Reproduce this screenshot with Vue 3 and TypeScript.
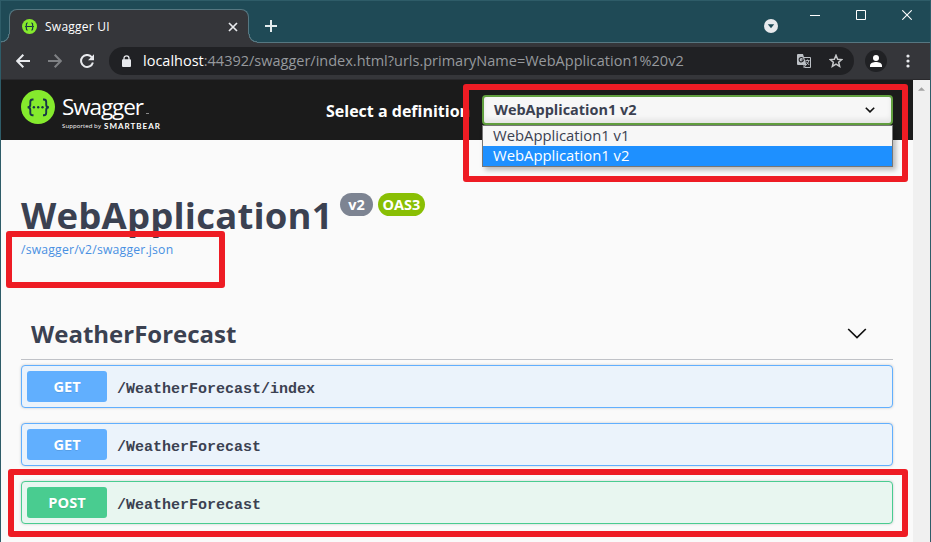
<script setup lang="ts">
interface Operation {
  method: 'get' | 'post'
  path: string
}

const definitions: string[] = ['WebApplication1 v1', 'WebApplication1 v2']
const selected = 'WebApplication1 v2'
const operations: Operation[] = [
  { method: 'get', path: '/WeatherForecast/index' },
  { method: 'get', path: '/WeatherForecast' },
  { method: 'post', path: '/WeatherForecast' },
]
</script>

<template>
  <div class="window">
    <header class="titlebar">
      <div class="tab">
        <svg class="favicon" viewBox="0 0 34 34">
          <circle cx="17" cy="17" r="17" fill="#85ea2d" />
          <g fill="none" stroke="#173647" stroke-width="2.6">
            <path d="M13 9h-1q-2 0-2 2.500v3q0 2.500-3 2.500q3 0 3 2.500v3q0 2.500 2 2.500h1M21 9h1q2 0 2 2.500v3q0 2.500 3 2.500q-3 0-3 2.500v3q0 2.500-2 2.500h-1M11 17h12" />
          </g>
        </svg>
        <span class="tab-title">Swagger UI</span>
        <svg class="tab-close" viewBox="0 0 10 10"><path d="M1 1l8 8M9 1l-8 8" stroke="#e8eaed" stroke-width="1.700" /></svg>
      </div>
      <svg class="new-tab" viewBox="0 0 12 12"><path d="M6 0v12M0 6h12" stroke="#e4ecee" stroke-width="2" /></svg>
      <svg class="tab-search" viewBox="0 0 14 14"><circle cx="7" cy="7" r="7" fill="#e8eaed" /><path d="M3.800 5.200h6.400L7 9.200z" fill="#1f4a56" /></svg>
      <svg class="win min" viewBox="0 0 10 10"><path d="M0 5.500h10" stroke="#fff" /></svg>
      <svg class="win max" viewBox="0 0 10 10"><path d="M.5.500h9v9h-9z" fill="none" stroke="#fff" /></svg>
      <svg class="win close" viewBox="0 0 10 10"><path d="M.3.300l9.400 9.400M9.700.300L.3 9.700" stroke="#fff" stroke-width="1.100" /></svg>
    </header>

    <nav class="toolbar">
      <svg class="nav back" viewBox="0 0 14 14"><path d="M14 7H1.500M7.300.800L1.200 7l6.100 6.200" /></svg>
      <svg class="nav forward" viewBox="0 0 14 14"><path d="M0 7h12.500M6.700.800L12.800 7l-6.100 6.200" /></svg>
      <svg class="nav reload" viewBox="0 0 14 14"><path d="M11.700 3.100A6 6 0 1 0 12.900 8.500" /><path d="M14 .200v6H8z" fill="#e8eaed" stroke="none" /></svg>
      <div class="omnibox">
        <svg class="lock" viewBox="0 0 9 12"><path d="M2 5V3.300a2.500 2.500 0 0 1 5 0V5" fill="none" stroke="#e8eaed" stroke-width="1.300" /><rect y="4.300" width="9" height="7.700" rx="1" fill="#e8eaed" /></svg>
        <span class="url"><b>localhost</b>:44392/swagger/index.html?urls.primaryName=WebApplication1%20v2</span>
        <svg class="translate" viewBox="0 0 14 14">
          <path d="M6.500 3.500h7v10h-6" fill="none" stroke="#bdc1c6" />
          <path d="M1 0h5l3.500 11H1q-1 0-1-1V1q0-1 1-1z" fill="#bdc1c6" />
          <path d="M6.200 4.500A2.200 2.200 0 1 0 6.500 6H4.500" fill="none" stroke="#202124" stroke-width="1.100" />
          <path d="M8.500 6.500h4M10.500 5.500v1M12 6.500q-1 3-3 4.500M9 7.500l3.200 3.500M7 11v2.500l2-2.500" fill="none" stroke="#bdc1c6" stroke-width=".9" />
        </svg>
        <svg class="star" viewBox="0 0 14 14"><path d="M7 1.300l1.650 3.900 4.200.350-3.200 2.750 1 4.100L7 10.200l-3.650 2.200 1-4.100-3.200-2.750 4.200-.350z" fill="none" stroke="#c6c8ca" stroke-width="1.500" /></svg>
      </div>
      <svg class="avatar" viewBox="0 0 22 22"><circle cx="11" cy="11" r="11" fill="#202124" /><circle cx="11" cy="8" r="3" fill="#fff" /><path d="M5 17v-1.500C5 13 8.500 12 11 12s6 1 6 3.500V17z" fill="#fff" /></svg>
      <svg class="menu" viewBox="0 0 4 14"><g fill="#e8eaed"><circle cx="2" cy="2" r="1.600" /><circle cx="2" cy="7" r="1.600" /><circle cx="2" cy="12" r="1.600" /></g></svg>
    </nav>

    <div class="viewport">
      <main class="page">
        <div class="topbar">
          <svg class="logo" viewBox="0 0 34 34">
            <circle cx="17" cy="17" r="17" fill="#85ea2d" />
            <path d="M12.500 9.500h-1Q9.300 9.500 9.300 12v2.700Q9.300 17 6.700 17.300Q9.300 17.600 9.300 20v2.700q0 2.500 2.200 2.500h1M22 9.500h1q2.200 0 2.200 2.500v2.700q0 2.300 2.600 2.600q-2.600.3-2.600 2.700v2.700q0 2.500-2.200 2.500h-1" fill="none" stroke="#173647" stroke-width="1.900" />
            <g fill="#173647"><circle cx="12.900" cy="17.300" r="1.200" /><circle cx="17.200" cy="17.300" r="1.200" /><circle cx="21.500" cy="17.300" r="1.200" /></g>
          </svg>
          <div class="brand">
            <div class="brand-name">Swagger<i></i></div>
            <div class="brand-by"><span>Supported by</span><b>SMARTBEAR</b></div>
          </div>
          <label class="select-label">Select a definition</label>
          <div class="select">
            <span>{{ selected }}</span>
            <svg viewBox="0 0 10 6"><path d="M.8.700L5 4.900 9.200.700" fill="none" stroke="#111" stroke-width="1.600" /></svg>
            <ul class="options">
              <li v-for="name in definitions" :key="name" :class="{ active: name === selected }">{{ name }}</li>
            </ul>
          </div>
        </div>

        <section class="info">
          <h2><span class="title">WebApplication1</span><span class="badge version">v2</span><span class="badge oas">OAS3</span></h2>
          <a class="spec">/swagger/v2/swagger.json</a>
        </section>

        <section class="tag">
          <h3>
            <span>WeatherForecast</span>
            <svg viewBox="0 0 20 11"><path d="M1.200 1l8.800 8.500L18.800 1" fill="none" stroke="#111" stroke-width="1.700" /></svg>
          </h3>
          <div v-for="op in operations" :key="op.method + op.path" class="op" :class="op.method">
            <span class="method">{{ op.method.toUpperCase() }}</span>
            <span class="path">{{ op.path }}</span>
          </div>
        </section>
      </main>
      <aside class="scrollbar"><svg viewBox="0 0 8 4"><path d="M0 4l4-4 4 4z" fill="#a3a3a3" /></svg></aside>
    </div>

    <div class="mark mark-select"></div>
    <div class="mark mark-spec"></div>
    <div class="mark mark-post"></div>
  </div>
</template>

<style>
body {
  margin: 0;
  overflow: hidden;
}
</style>

<style scoped>
* {
  box-sizing: border-box;
}
svg {
  display: block;
  flex: none;
}
.window {
  position: relative;
  width: 931px;
  height: 542px;
  overflow: hidden;
  display: flex;
  flex-direction: column;
  border: 1px solid #2e5c68;
  border-bottom: 0;
  background: #fafafa;
  font-family: "Open Sans", "Noto Sans", sans-serif;
  white-space: nowrap;
}
.titlebar {
  height: 42px;
  display: flex;
  flex: none;
  background: #1f4a56;
  border-bottom: 1px solid #567781;
}
.tab {
  position: relative;
  width: 240px;
  height: 34px;
  margin: 8px 0 0 8px;
  padding: 0 10px 0 12px;
  display: flex;
  align-items: center;
  background: #35363a;
  border: 1px solid #567781;
  border-bottom: 0;
  border-radius: 8px 8px 0 0;
}
.tab::before,
.tab::after {
  content: "";
  position: absolute;
  bottom: 0;
  width: 9px;
  height: 9px;
  border-bottom: 1px solid #567781;
  background: radial-gradient(circle at 0 0, #1f4a56 7px, #567781 7.500px 8.200px, #35363a 8.700px);
  border: 0;
}
.tab::before {
  left: -9px;
}
.tab::after {
  right: -9px;
  background: radial-gradient(circle at 100% 0, #1f4a56 7px, #567781 7.500px 8.200px, #35363a 8.700px);
}
.favicon {
  width: 15px;
  height: 15px;
}
.tab-title {
  margin-left: 8px;
  flex: 1;
  color: #fff;
  font-size: 12px;
  line-height: 16px;
  letter-spacing: 0.25px;
}
.tab-close {
  width: 10px;
  height: 10px;
}
.new-tab {
  width: 12px;
  height: 12px;
  margin: 19px 0 0 16px;
}
.tab-search {
  width: 14px;
  height: 14px;
  margin: 18px 0 0 auto;
}
.win {
  width: 10px;
  height: 10px;
}
.min {
  margin: 9px 0 0 32px;
}
.max {
  margin: 9px 0 0 36px;
}
.close {
  margin: 9px 18px 0 36px;
}
.toolbar {
  height: 37px;
  flex: none;
  display: flex;
  align-items: center;
  padding: 0 20px 1px 15px;
  background: #35363a;
  border-bottom: 1px solid #29292c;
}
.nav {
  width: 14px;
  height: 14px;
  fill: none;
  stroke: #e8eaed;
  stroke-width: 2;
}
.forward {
  margin-left: 18px;
  stroke: #7f8184;
}
.reload {
  margin-left: 18px;
}
.omnibox {
  width: 745px;
  height: 28px;
  margin-left: 15px;
  padding: 0 11px 0 13px;
  display: flex;
  align-items: center;
  background: #202124;
  border-radius: 14px;
}
.lock {
  width: 9px;
  height: 12px;
}
.url {
  flex: 1;
  margin-left: 12px;
  color: #96999d;
  font-size: 14.5px;
  line-height: 20px;
}
.url b {
  color: #fff;
  font-weight: 400;
}
.translate {
  width: 14px;
  height: 14px;
}
.star {
  width: 14px;
  height: 14px;
  margin-left: 18px;
}
.avatar {
  width: 22px;
  height: 22px;
  margin-left: 11px;
}
.menu {
  width: 4px;
  height: 14px;
  margin-left: auto;
}
.viewport {
  flex: 1;
  display: flex;
}
.page {
  width: 912px;
  flex: none;
  color: #3b4151;
}
.scrollbar {
  flex: 1;
  padding: 7px 0 0 5px;
  background: #f0f0f0;
}
.scrollbar svg {
  width: 7px;
  height: 4px;
}
.topbar {
  height: 60px;
  display: flex;
  padding-left: 20px;
  background: #1b1b1b;
}
.logo {
  width: 34px;
  height: 34px;
  margin-top: 10px;
}
.brand {
  width: 100px;
  margin-left: 7px;
  padding-top: 12px;
  color: #fff;
}
.brand-name {
  display: flex;
  align-items: center;
  font-size: 22.5px;
  line-height: 29px;
  letter-spacing: -1.1px;
}
.brand-name i {
  width: 3px;
  height: 1px;
  margin: 13px 0 0 3px;
  background: #888;
}
.brand-by {
  display: flex;
  align-items: center;
  height: 10px;
  font-size: 6px;
  line-height: 10px;
}
.brand-by span {
  width: 42px;
  letter-spacing: 0.1px;
}
.brand-by b {
  font-family: Lato, sans-serif;
  font-size: 8px;
  letter-spacing: 1px;
}
.select-label {
  width: 156px;
  margin: 20px 0 0 164px;
  color: #fff;
  font-size: 16px;
  font-weight: 700;
  line-height: 22px;
}
.select {
  position: relative;
  width: 411px;
  height: 30px;
  margin-top: 15px;
  padding: 0 16px 0 10px;
  display: flex;
  align-items: center;
  justify-content: space-between;
  background: #f7f7f7;
  border: 2px solid #62a03f;
  border-radius: 4px;
  box-shadow: inset 0 -4px 5px #00000012;
  font-size: 14.45px;
  font-weight: 700;
}
.select > span {
  margin-top: -2px;
}
.select svg {
  width: 10px;
  height: 6px;
}
.options {
  position: absolute;
  z-index: 1;
  left: -2px;
  top: 28px;
  width: 411px;
  margin: 0;
  padding: 0;
  list-style: none;
  background: #f7f7f7;
  border: 1px solid #767676;
  box-shadow: 3px 3px 5px #0004;
  font-size: 14.8px;
  font-weight: 400;
}
.options li {
  height: 20px;
  padding-left: 10px;
  line-height: 19px;
}
.options .active {
  background: #1e90ff;
  color: #fff;
}
.info {
  height: 166px;
  padding: 50px 20px 0;
}
.info h2 {
  display: flex;
  height: 50px;
  margin: 0;
}
.title {
  width: 319px;
  font-size: 36.5px;
  line-height: 50px;
  letter-spacing: 0.2px;
}
.badge {
  height: 23px;
  margin-top: 3px;
  border-radius: 12px;
  color: #fff;
  font-size: 14.5px;
  line-height: 23px;
  text-align: center;
}
.version {
  width: 33px;
  background: #7d8492;
}
.oas {
  width: 47px;
  margin-left: 5px;
  background: #89bf04;
}
.spec {
  display: block;
  color: #4990e2;
  font-size: 12.2px;
  line-height: 20px;
  letter-spacing: 0.2px;
}
.tag {
  padding: 0 20px;
}
.tag h3 {
  display: flex;
  align-items: center;
  justify-content: space-between;
  height: 54px;
  margin: 0 0 5px;
  padding: 0 26px 0 10px;
  border-bottom: 1px solid #c0c2c7;
  font-size: 24px;
}
.tag h3 span {
  padding-top: 2px;
}
.tag h3 svg {
  width: 20px;
  height: 11px;
  margin-top: 2px;
}
.op {
  height: 43px;
  margin-bottom: 15px;
  padding: 0 5px;
  display: flex;
  align-items: center;
  border: 1px solid #61affe;
  border-radius: 4px;
  background: #ebf3fb;
  box-shadow: 0 0 3px #00000030;
}
.method {
  width: 80px;
  height: 31px;
  border-radius: 3px;
  background: #61affe;
  color: #fff;
  font-size: 14.6px;
  font-weight: 700;
  line-height: 31px;
  text-align: center;
  text-shadow: 0 1px 0 #0000001a;
}
.path {
  margin: 6px 0 0 10px;
  font-family: "Liberation Mono", monospace;
  font-size: 15px;
  font-weight: 700;
}
.post {
  border-color: #49cc90;
  background: #e8f6f0;
}
.post .method {
  background: #49cc90;
}
.mark {
  position: absolute;
  z-index: 2;
  border: 6px solid #ee1c24;
  border-radius: 3px;
}
.mark-select {
  left: 462px;
  top: 83px;
  width: 445px;
  height: 98px;
}
.mark-spec {
  left: 5px;
  top: 230px;
  width: 219px;
  height: 57px;
}
.mark-post {
  left: 7px;
  top: 468px;
  width: 900px;
  height: 68px;
}
</style>
